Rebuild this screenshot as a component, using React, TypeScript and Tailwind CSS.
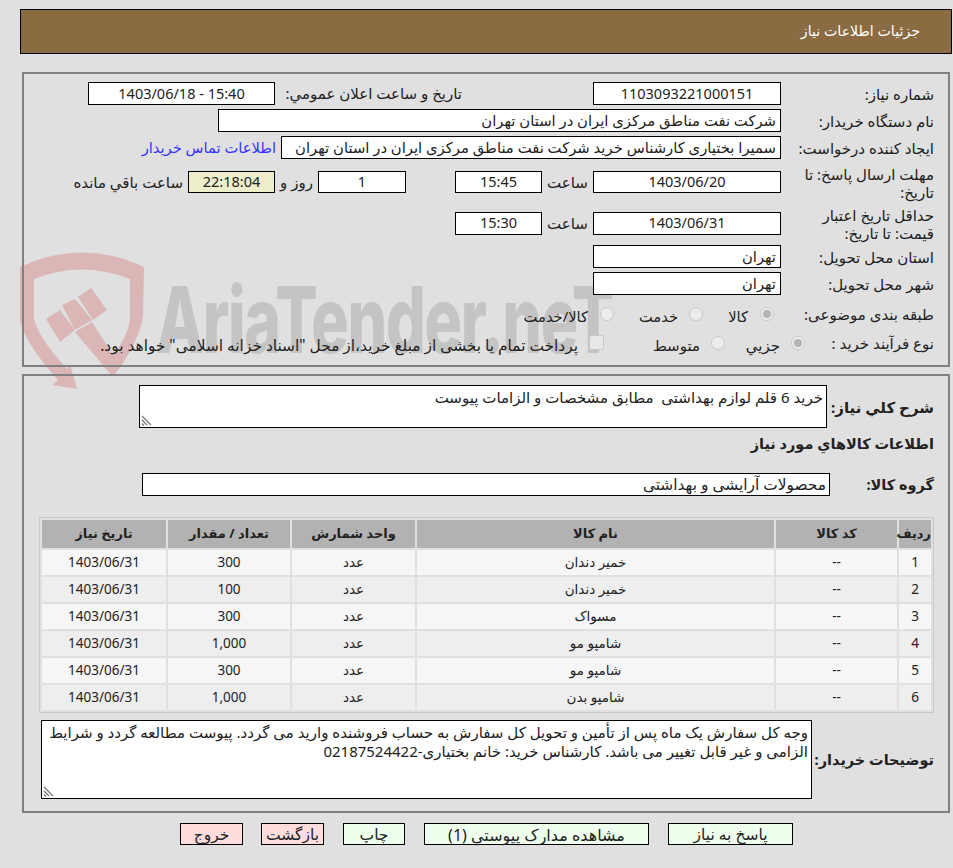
const font = "font-['Noto_Sans','DejaVu_Sans',sans-serif]";

function Box({ w, children, align = "center", className = "" }: { w: string; children?: React.ReactNode; align?: string; className?: string }) {
  return (
    <div
      className={`${w} shrink-0 border border-black bg-white flex items-center px-[4px] text-[#222] whitespace-nowrap overflow-hidden ${align === "center" ? "justify-center text-[14.5px]" : "justify-start text-[14.8px]"} ${className}`}
    >
      {children}
    </div>
  );
}

function Label({ children, w = "w-[167px]" }: { children: React.ReactNode; w?: string }) {
  return <div className={`${w} shrink-0 pr-[14px] pl-[3px] pt-[1px] text-[15px] leading-[18px] text-[#222]`}>{children}</div>;
}

function Radio({ checked }: { checked?: boolean }) {
  return (
    <span className="block w-[14px] h-[14px] rounded-full border border-[#c8c8c8] bg-[#ececec] shrink-0 p-[2px]">
      {checked && <span className="block w-[8px] h-[8px] rounded-full bg-[#b4b4b4]" />}
    </span>
  );
}

function Grip() {
  return (
    <svg className="absolute left-[1px] bottom-[1px]" width="12" height="12" viewBox="0 0 12 12">
      <path d="M1 2 L10 11 M1 6 L6 11 M1 9.5 L3 11.5" stroke="#777" strokeWidth="1.3" fill="none" />
    </svg>
  );
}

const rows = [
  ["1", "خمیر دندان", "300"],
  ["2", "خمیر دندان", "100"],
  ["3", "مسواک", "300"],
  ["4", "شامپو مو", "1,000"],
  ["5", "شامپو مو", "300"],
  ["6", "شامپو بدن", "1,000"],
];

function Btn({ w, bg, children }: { w: string; bg: string; children: React.ReactNode }) {
  return <button className={`${w} ${bg} h-[22px] border border-black text-[15.5px] text-[#222] leading-none pt-[2px] whitespace-nowrap`}>{children}</button>;
}

function Watermark() {
  return (
    <div className="absolute left-[20px] top-[250px] w-[620px] h-[140px] pointer-events-none" dir="ltr">
      <svg className="absolute left-0 top-0" width="126" height="140" viewBox="0 -2 126 140" fill="#dab6b6">
        <path d="M0 15 Q62 -14 124 15 L123 65 Q118 92 93 125 L55 80 L72 70 L93 103 Q108 85 110 67 L110 27 Q62 8 14 27 L14 67 Q18 85 47 117 L50 112 L57 137 L32 133 L38 128 Q8 95 0 70 Z" />
        <path d="M26 67 L40 58 L55 78 L40 90 Z" />
        <path d="M42 53 L55 47 L72 68 L55 78 Z" />
        <path d="M58 45 L71 36 L87 58 L73 68 Z" />
      </svg>
      <div className="absolute left-[136px] top-[20px] text-[92px] leading-[100px] font-extrabold tracking-[-2px] text-[#c4c4c4] font-['Inter',sans-serif] whitespace-nowrap origin-left scale-x-[0.68]">
        AriaTender.neT
      </div>
    </div>
  );
}

export default function App() {
  return (
    <div dir="rtl" className={`relative min-h-[868px] bg-[#e0e0e0] pt-[9px] pl-[20px] pr-px ${font}`}>
      <div className="h-[45px] border border-black bg-[#8b6b41] flex items-center pr-[31px] pb-px text-[14.2px] text-white">جزئيات اطلاعات نياز</div>

      <Watermark />

      <div className="relative mt-[18px] mx-[2px] h-[295px] border-2 border-[#808080] pt-[8px]">
        <div className="flex items-center h-[23px]">
          <Label>شماره نیاز:</Label>
          <Box w="w-[188px] h-[23px]">1103093221000151</Box>
          <div className="w-[187px] mr-[131px] text-[15px] text-[#222] whitespace-nowrap">تاریخ و ساعت اعلان عمومي:</div>
          <Box w="w-[187px] h-[23px]"><span dir="ltr">1403/06/18 - 15:40</span></Box>
        </div>
        <div className="flex items-center h-[23px] mt-[4px]">
          <Label>نام دستگاه خریدار:</Label>
          <Box w="w-[563px] h-[23px]" align="start">شرکت نفت مناطق مرکزی ایران در استان تهران</Box>
        </div>
        <div className="flex items-center h-[23px] mt-[4px]">
          <Label>ایجاد کننده درخواست:</Label>
          <Box w="w-[500px] h-[23px]" align="start">سمیرا بختیاری کارشناس خرید شرکت نفت مناطق مرکزی ایران در استان تهران</Box>
          <a className="mr-[5px] text-[14.7px] text-[#3333ff] whitespace-nowrap">اطلاعات تماس خريدار</a>
        </div>
        <div className="flex items-center h-[36px] mt-[5px]">
          <Label>مهلت ارسال پاسخ: تا تاریخ:</Label>
          <Box w="w-[188px] h-[22px]">1403/06/20</Box>
          <span className="w-[51px] text-center text-[15px] text-[#222]">ساعت</span>
          <Box w="w-[87px] h-[22px]">15:45</Box>
          <span className="w-[49px]" />
          <Box w="w-[88px] h-[22px]">1</Box>
          <span className="w-[43px] text-center text-[15px] text-[#222]">روز و</span>
          <Box w="w-[87px] h-[22px]" className="!bg-[#eeeecc]">22:18:04</Box>
          <span className="mr-[5px] text-[15px] text-[#222] whitespace-nowrap">ساعت باقي مانده</span>
        </div>
        <div className="flex items-center h-[36px] mt-[5px]">
          <Label>حداقل تاریخ اعتبار قیمت: تا تاریخ:</Label>
          <Box w="w-[188px] h-[23px]">1403/06/31</Box>
          <span className="w-[51px] text-center text-[15px] text-[#222]">ساعت</span>
          <Box w="w-[87px] h-[23px]">15:30</Box>
        </div>
        <div className="flex items-center h-[23px] mt-[4px]">
          <Label>استان محل تحویل:</Label>
          <Box w="w-[188px] h-[23px]" align="start">تهران</Box>
        </div>
        <div className="flex items-center h-[23px] mt-[4px]">
          <Label>شهر محل تحویل:</Label>
          <Box w="w-[188px] h-[23px]" align="start">تهران</Box>
        </div>
        <div className="flex items-center h-[23px] mt-[7px] text-[14.7px] text-[#222]">
          <Label>طبقه بندی موضوعی:</Label>
          <span className="mr-[7px]"><Radio checked /></span>
          <span className="w-[57px] pr-[12px] pt-[5px]">کالا</span>
          <Radio />
          <span className="w-[75px] pr-[11px] pt-[5px]">خدمت</span>
          <Radio />
          <span className="pr-[12px] pt-[5px] whitespace-nowrap">کالا/خدمت</span>
        </div>
        <div className="flex items-center h-[23px] mt-[6px] text-[15px] text-[#222]">
          <Label w="w-[143px]">نوع فرآیند خرید :</Label>
          <Radio checked />
          <span className="w-[66px] pr-[11px] pt-[6px]">جزيي</span>
          <Radio />
          <span className="w-[107px] pr-[11px] pt-[6px]">متوسط</span>
          <span className="block w-[15px] h-[15px] rounded-[3px] border border-[#c8c8c8] bg-[#e8e8e8] shrink-0" />
          <span className="pr-[11px] pt-[6px] text-[15.4px] whitespace-nowrap">پرداخت تمام یا بخشی از مبلغ خرید،از محل "اسناد خزانه اسلامی" خواهد بود.</span>
        </div>
      </div>

      <div className="relative mt-[7px] mx-[2px] h-[439px] border-2 border-[#808080]">
        <div className="flex items-start pt-[9px]">
          <div className="w-[121px] shrink-0 pr-[14px] pt-[11px] text-[15px] font-bold text-[#222] whitespace-nowrap">شرح کلي نیاز:</div>
          <div className="relative w-[688px] h-[43px] border border-black bg-white px-[3px] pt-[2px] text-[15px] leading-[18px] text-[#222]">
            خرید 6 قلم لوازم بهداشتی&nbsp; مطابق مشخصات و الزامات پیوست
            <Grip />
          </div>
        </div>
        <div className="pr-[14px] mt-[3px] h-[24px] leading-[24px] text-[14.5px] font-bold text-[#222]">اطلاعات كالاهاي مورد نياز</div>
        <div className="flex items-center mt-[18px]">
          <div className="w-[118px] shrink-0 pr-[14px] text-[14.5px] font-bold text-[#222]">گروه کالا:</div>
          <Box w="w-[688px] h-[23px]" align="start" className="!px-[3px] !text-[15.4px]">محصولات آرایشی و بهداشتی</Box>
        </div>

        <div className="mt-[21px] mr-[14px] ml-[15px] border border-[#c8c8c8]">
          <table className="w-full table-fixed border-separate border-spacing-[2px] text-[13.5px] text-[#222]">
            <thead>
              <tr className="bg-[#b2b2b2] h-[28px] text-[13px]">
                <th className="w-[32px] font-bold whitespace-nowrap">ردیف</th>
                <th className="w-[121px] font-bold">کد کالا</th>
                <th className="w-[357px] font-bold">نام کالا</th>
                <th className="w-[123px] font-bold">واحد شمارش</th>
                <th className="w-[122px] font-bold">تعداد / مقدار</th>
                <th className="font-bold">تاریخ نیاز</th>
              </tr>
            </thead>
            <tbody>
              {rows.map((r, i) => (
                <tr key={r[0]} className={`h-[25px] text-center ${i % 2 === 0 ? "bg-[#f6f6f6]" : "bg-[#eeeeee]"}`}>
                  <td>{r[0]}</td>
                  <td>--</td>
                  <td>{r[1]}</td>
                  <td>عدد</td>
                  <td>{r[2]}</td>
                  <td>1403/06/31</td>
                </tr>
              ))}
            </tbody>
          </table>
        </div>

        <div className="flex items-center mt-[7px]">
          <div className="w-[136px] shrink-0 pr-[14px] text-[14.5px] font-bold text-[#222] whitespace-nowrap">توضیحات خریدار:</div>
          <div className="relative w-[771px] h-[79px] border border-black bg-white px-[3px] pt-[2px] text-[15px] leading-[19px] text-[#222]">
            وجه کل سفارش یک ماه پس از تأمین و تحویل کل سفارش به حساب فروشنده واريد می گردد. پیوست مطالعه گردد و شرایط الزامی و غیر قابل تغییر می باشد. کارشناس خرید: خانم بختیاری-02187524422
            <Grip />
          </div>
        </div>
      </div>

      <div className="flex mt-[10px] pr-[159px]">
        <Btn w="w-[125px]" bg="bg-[#eeffee]">پاسخ به نياز</Btn>
        <Btn w="w-[225px] mr-[19px] !text-[16px]" bg="bg-[#eeffee]">مشاهده مدارک پیوستي (1)</Btn>
        <Btn w="w-[62px] mr-[19px]" bg="bg-[#eeffee]">چاپ</Btn>
        <Btn w="w-[63px] mr-[19px]" bg="bg-[#ffdddd]">بازگشت</Btn>
        <Btn w="w-[63px] mr-[18px]" bg="bg-[#ffdddd]">خروج</Btn>
      </div>
    </div>
  );
}
